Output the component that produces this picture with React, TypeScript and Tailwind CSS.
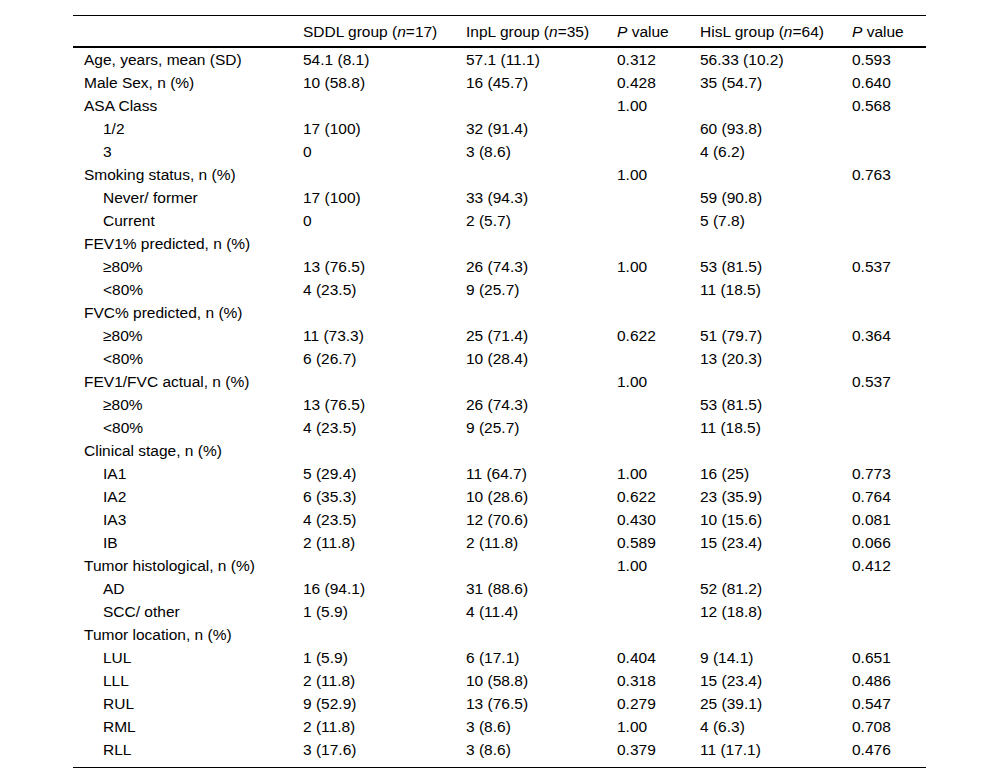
import React from "react";

type Row = {
    label: string;
    indent?: boolean;
    cells: string[];
};

const rows: Row[] = [
    { label: "Age, years, mean (SD)", cells: ["54.1 (8.1)", "57.1 (11.1)", "0.312", "56.33 (10.2)", "0.593"] },
    { label: "Male Sex, n (%)", cells: ["10 (58.8)", "16 (45.7)", "0.428", "35 (54.7)", "0.640"] },
    { label: "ASA Class", cells: ["", "", "1.00", "", "0.568"] },
    { label: "1/2", indent: true, cells: ["17 (100)", "32 (91.4)", "", "60 (93.8)", ""] },
    { label: "3", indent: true, cells: ["0", "3 (8.6)", "", "4 (6.2)", ""] },
    { label: "Smoking status, n (%)", cells: ["", "", "1.00", "", "0.763"] },
    { label: "Never/ former", indent: true, cells: ["17 (100)", "33 (94.3)", "", "59 (90.8)", ""] },
    { label: "Current", indent: true, cells: ["0", "2 (5.7)", "", "5 (7.8)", ""] },
    { label: "FEV1% predicted, n (%)", cells: ["", "", "", "", ""] },
    { label: "≥80%", indent: true, cells: ["13 (76.5)", "26 (74.3)", "1.00", "53 (81.5)", "0.537"] },
    { label: "<80%", indent: true, cells: ["4 (23.5)", "9 (25.7)", "", "11 (18.5)", ""] },
    { label: "FVC% predicted, n (%)", cells: ["", "", "", "", ""] },
    { label: "≥80%", indent: true, cells: ["11 (73.3)", "25 (71.4)", "0.622", "51 (79.7)", "0.364"] },
    { label: "<80%", indent: true, cells: ["6 (26.7)", "10 (28.4)", "", "13 (20.3)", ""] },
    { label: "FEV1/FVC actual, n (%)", cells: ["", "", "1.00", "", "0.537"] },
    { label: "≥80%", indent: true, cells: ["13 (76.5)", "26 (74.3)", "", "53 (81.5)", ""] },
    { label: "<80%", indent: true, cells: ["4 (23.5)", "9 (25.7)", "", "11 (18.5)", ""] },
    { label: "Clinical stage, n (%)", cells: ["", "", "", "", ""] },
    { label: "IA1", indent: true, cells: ["5 (29.4)", "11 (64.7)", "1.00", "16 (25)", "0.773"] },
    { label: "IA2", indent: true, cells: ["6 (35.3)", "10 (28.6)", "0.622", "23 (35.9)", "0.764"] },
    { label: "IA3", indent: true, cells: ["4 (23.5)", "12 (70.6)", "0.430", "10 (15.6)", "0.081"] },
    { label: "IB", indent: true, cells: ["2 (11.8)", "2 (11.8)", "0.589", "15 (23.4)", "0.066"] },
    { label: "Tumor histological, n (%)", cells: ["", "", "1.00", "", "0.412"] },
    { label: "AD", indent: true, cells: ["16 (94.1)", "31 (88.6)", "", "52 (81.2)", ""] },
    { label: "SCC/ other", indent: true, cells: ["1 (5.9)", "4 (11.4)", "", "12 (18.8)", ""] },
    { label: "Tumor location, n (%)", cells: ["", "", "", "", ""] },
    { label: "LUL", indent: true, cells: ["1 (5.9)", "6 (17.1)", "0.404", "9 (14.1)", "0.651"] },
    { label: "LLL", indent: true, cells: ["2 (11.8)", "10 (58.8)", "0.318", "15 (23.4)", "0.486"] },
    { label: "RUL", indent: true, cells: ["9 (52.9)", "13 (76.5)", "0.279", "25 (39.1)", "0.547"] },
    { label: "RML", indent: true, cells: ["2 (11.8)", "3 (8.6)", "1.00", "4 (6.3)", "0.708"] },
    { label: "RLL", indent: true, cells: ["3 (17.6)", "3 (8.6)", "0.379", "11 (17.1)", "0.476"] },
];

const widths = ["w-[219px]", "w-[163px]", "w-[151px]", "w-[83px]", "w-[152px]", "w-[85px]"];

export default function App() {
    return (
        <div className="min-h-[783px] bg-white pt-[15px] font-['Liberation_Sans',Arial,sans-serif] text-[15.5px] text-black">
            <div className="ml-[73px] w-[853px] border-t border-b border-black pb-[6px]">
                <table className="w-full table-fixed border-collapse">
                    <colgroup>
                        {widths.map((w, i) => (
                            <col key={i} className={w} />
                        ))}
                    </colgroup>
                    <thead>
                        <tr className="h-[31px] border-b-2 border-black">
                            <th className="pl-[11px] pt-[1px] text-left font-normal"></th>
                            <th className="pl-[11px] pt-[1px] text-left font-normal">
                                SDDL group (<i>n</i>=17)
                            </th>
                            <th className="pl-[11px] pt-[1px] text-left font-normal">
                                InpL group (<i>n</i>=35)
                            </th>
                            <th className="pl-[11px] pt-[1px] text-left font-normal">
                                <i>P</i> value
                            </th>
                            <th className="pl-[11px] pt-[1px] text-left font-normal">
                                HisL group (<i>n</i>=64)
                            </th>
                            <th className="pl-[11px] pt-[1px] text-left font-normal">
                                <i>P</i> value
                            </th>
                        </tr>
                    </thead>
                    <tbody>
                        {rows.map((r, i) => (
                            <tr key={i} className="h-[23px] leading-[23px]">
                                <td className={r.indent ? "pl-[30px] whitespace-nowrap" : "pl-[11px] whitespace-nowrap"}>
                                    {r.label}
                                </td>
                                {r.cells.map((c, j) => (
                                    <td key={j} className="pl-[11px] whitespace-nowrap">
                                        {c}
                                    </td>
                                ))}
                            </tr>
                        ))}
                    </tbody>
                </table>
            </div>
        </div>
    );
}
